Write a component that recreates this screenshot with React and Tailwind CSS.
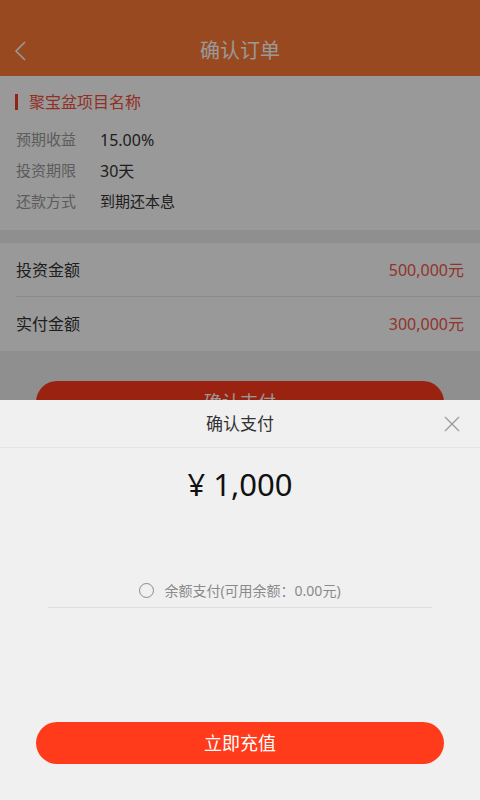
import React from "react";

const font = { fontFamily: '"Noto Sans", "Noto Sans CJK SC", sans-serif' };

export default function App() {
  return (
    <div className="relative w-[480px] h-[800px] overflow-hidden bg-[#eeeeee]" style={font}>
      {/* Header */}
      <div className="h-[76px] bg-[#ff7b34] pt-[26px]">
        <div className="relative h-[50px] flex items-center justify-center">
          <svg className="absolute left-[14px] top-[14px]" width="14" height="22" viewBox="0 0 14 22" fill="none">
            <polyline points="11,2 2,11 11,20" stroke="#ffffff" strokeWidth="1.6" />
          </svg>
          <span className="text-[20px] text-white">确认订单</span>
        </div>
      </div>

      {/* Project info */}
      <div className="bg-white pt-[15px] pb-[13px]">
        <div className="flex items-center h-[22px] pl-[15px]">
          <div className="w-[3px] h-[16px] bg-[#f23c20]" />
          <span className="ml-[11px] text-[16px] text-[#f2503a]">聚宝盆项目名称</span>
        </div>
        <div className="mt-[11px] pl-[16px]">
          <div className="flex items-center h-[31px]">
            <span className="w-[84px] text-[15px] text-[#9a9a9a]">预期收益</span>
            <span className="text-[16px] text-[#333333]">15.00%</span>
          </div>
          <div className="flex items-center h-[31px]">
            <span className="w-[84px] text-[15px] text-[#9a9a9a]">投资期限</span>
            <span className="text-[16px] text-[#333333]">30天</span>
          </div>
          <div className="flex items-center h-[31px]">
            <span className="w-[84px] text-[15px] text-[#9a9a9a]">还款方式</span>
            <span className="text-[15px] text-[#333333]">到期还本息</span>
          </div>
        </div>
      </div>

      {/* Amounts */}
      <div className="mt-[13px] bg-white">
        <div className="ml-[16px] pr-[16px] h-[54px] flex items-center justify-between border-b border-[#e6e6e6]">
          <span className="text-[16px] text-[#333333]">投资金额</span>
          <span className="text-[16px] text-[#f0584a]">500,000元</span>
        </div>
        <div className="ml-[16px] pr-[16px] h-[54px] flex items-center justify-between">
          <span className="text-[16px] text-[#333333]">实付金额</span>
          <span className="text-[16px] text-[#f0584a]">300,000元</span>
        </div>
      </div>

      <div className="mx-[36px] mt-[30px] h-[42px] rounded-full bg-[#ff3b1b] flex items-center justify-center">
        <span className="text-[18px] text-white">确认支付</span>
      </div>

      {/* Overlay */}
      <div className="absolute inset-0 bg-black/40" />

      {/* Sheet */}
      <div className="absolute left-0 right-0 bottom-0 h-[400px] bg-[#f0f0f0] flex flex-col">
        <div className="relative h-[48px] flex items-center justify-center border-b border-[#e4e4e4]">
          <span className="text-[17px] text-[#333333]">确认支付</span>
          <svg className="absolute right-[19px] top-[15px]" width="18" height="18" viewBox="0 0 18 18" fill="none">
            <line x1="2" y1="2" x2="16" y2="16" stroke="#9a9a9a" strokeWidth="1.2" />
            <line x1="16" y1="2" x2="2" y2="16" stroke="#9a9a9a" strokeWidth="1.2" />
          </svg>
        </div>
        <div className="mt-[17px] h-[38px] flex items-center justify-center">
          <span className="text-[31px] leading-[38px] text-[#111111]">¥ 1,000</span>
        </div>
        <div className="mt-[70px] mx-[48px] h-[35px] flex items-center justify-center border-b border-[#dedede]">
          <div className="w-[15px] h-[15px] rounded-full border border-[#8a8a8a]" />
          <span className="ml-[10px] text-[14px] text-[#8a8a8a]">余额支付(可用余额：0.00元)</span>
        </div>
        <div className="mt-auto mb-[36px] mx-[36px] h-[42px] rounded-full bg-[#ff3b1b] flex items-center justify-center">
          <span className="text-[18px] text-white">立即充值</span>
        </div>
      </div>
    </div>
  );
}
